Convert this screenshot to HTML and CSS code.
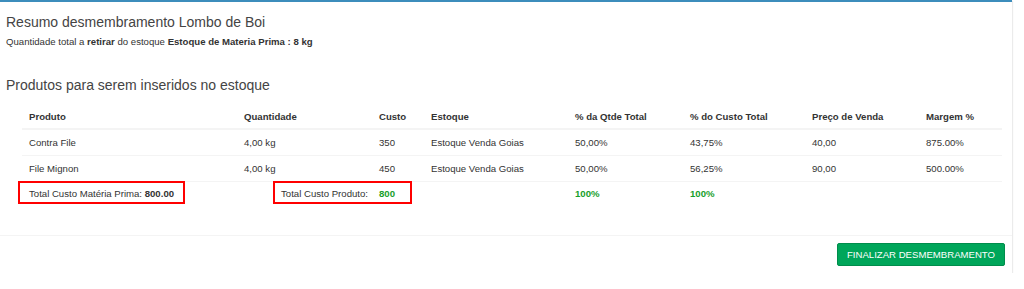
FILE: index.html
```html
<!DOCTYPE html>
<html lang="pt-BR">
<head>
    <meta charset="UTF-8">
    <meta name="viewport" content="width=device-width, initial-scale=1.0">
    <title>Resumo desmembramento</title>
    <link rel="stylesheet" href="styles.css">
</head>
<body>
    <div class="box">
        <div class="box-body">
            <h3 class="box-title">Resumo desmembramento Lombo de Boi</h3>
            <p class="resumo">Quantidade total a <b>retirar</b> do estoque <b>Estoque de Materia Prima : 8 kg</b></p>

            <h3 class="section-title">Produtos para serem inseridos no estoque</h3>

            <div class="table-wrap">
                <table class="table">
                    <colgroup>
                        <col style="width: 215px">
                        <col style="width: 135px">
                        <col style="width: 52px">
                        <col style="width: 144px">
                        <col style="width: 115px">
                        <col style="width: 122px">
                        <col style="width: 114px">
                        <col style="width: 83px">
                    </colgroup>
                    <thead>
                        <tr>
                            <th>Produto</th>
                            <th>Quantidade</th>
                            <th>Custo</th>
                            <th>Estoque</th>
                            <th>% da Qtde Total</th>
                            <th>% do Custo Total</th>
                            <th>Preço de Venda</th>
                            <th>Margem %</th>
                        </tr>
                    </thead>
                    <tbody>
                        <tr>
                            <td>Contra File</td>
                            <td>4,00 kg</td>
                            <td>350</td>
                            <td>Estoque Venda Goias</td>
                            <td>50,00%</td>
                            <td>43,75%</td>
                            <td>40,00</td>
                            <td>875.00%</td>
                        </tr>
                        <tr>
                            <td>File Mignon</td>
                            <td>4,00 kg</td>
                            <td>450</td>
                            <td>Estoque Venda Goias</td>
                            <td>50,00%</td>
                            <td>56,25%</td>
                            <td>90,00</td>
                            <td>500.00%</td>
                        </tr>
                        <tr class="total-row">
                            <td>Total Custo Matéria Prima: <b>800.00</b></td>
                            <td class="total-label">Total Custo Produto:</td>
                            <td><b class="text-green">800</b></td>
                            <td></td>
                            <td><b class="text-green">100%</b></td>
                            <td><b class="text-green">100%</b></td>
                            <td></td>
                            <td></td>
                        </tr>
                    </tbody>
                </table>
                <div class="mark mark-materia"></div>
                <div class="mark mark-produto"></div>
            </div>
        </div>
        <div class="box-footer">
            <button class="btn-success">FINALIZAR DESMEMBRAMENTO</button>
        </div>
    </div>
</body>
</html>
```

FILE: styles.css
```css
body {
    margin: 0;
    background: #fff;
    font-family: "Liberation Sans", Arial, sans-serif;
    color: #333;
}

.box {
    width: 1012px;
    border-top: 2px solid #3c8dbc;
    box-shadow: 1px 1px 1px rgba(0, 0, 0, 0.08);
    background: #fff;
}

.box-body {
    padding: 10px 10px 28px 6px;
}

.box-title,
.section-title {
    margin: 0;
    font-size: 14px;
    line-height: 18px;
    font-weight: normal;
    color: #444;
}

.box-title {
    padding-top: 1px;
}

.resumo {
    margin: 4px 0 0;
    font-size: 9.6px;
    line-height: 14px;
}

.section-title {
    margin-top: 27px;
}

.table-wrap {
    position: relative;
    margin: 10px 0 0 16px;
    width: 980px;
}

.table {
    width: 980px;
    border-collapse: collapse;
    table-layout: fixed;
    font-size: 9.6px;
}

.table th {
    text-align: left;
    font-weight: bold;
    padding: 6px 7px 4px;
    line-height: 14px;
    border-bottom: 2px solid #f4f4f4;
}

.table td {
    padding: 6px 7px;
    line-height: 13px;
    border-top: 1px solid #f4f4f4;
    white-space: nowrap;
}

.total-row td {
    padding-top: 5px;
    padding-bottom: 7px;
}

.table td.total-label {
    text-align: right;
    padding-right: 4px;
}

.text-green {
    color: #17a02a;
}

.mark {
    position: absolute;
    top: 77px;
    height: 19px;
    border: 2px solid #f00;
}

.mark-materia {
    left: -4px;
    width: 163px;
}

.mark-produto {
    left: 251px;
    width: 135px;
}

.box-footer {
    border-top: 1px solid #f4f4f4;
    padding: 7px 7px 7px;
    display: flex;
    justify-content: flex-end;
}

.btn-success {
    height: 23px;
    padding: 0 9px;
    background: #00a65a;
    border: 1px solid #008d4c;
    border-radius: 2px;
    color: #fff;
    font-family: "Liberation Sans", Arial, sans-serif;
    font-size: 9.6px;
}
```
